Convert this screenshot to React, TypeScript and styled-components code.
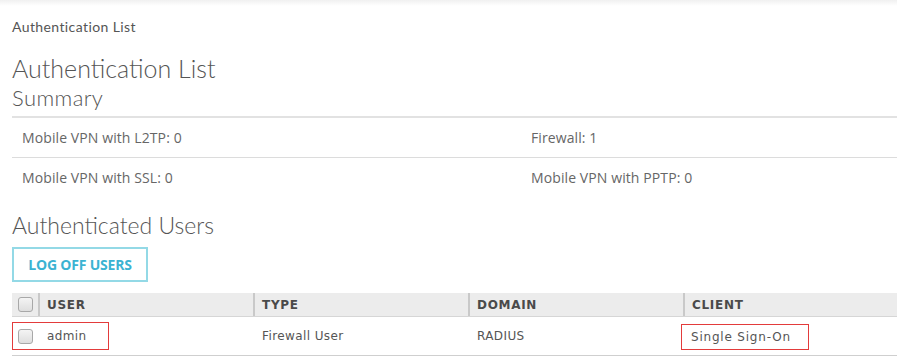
import React from "react";
import styled, { createGlobalStyle } from "styled-components";

const Global = createGlobalStyle`
  html, body { margin: 0; padding: 0; background: #fff; }
  body { width: 897px; height: 361px; overflow: hidden; }
`;

const Page = styled.div`
  position: relative;
  width: 897px;
  height: 361px;
  overflow: hidden;
  background: #fff;
  &::before {
    content: "";
    position: absolute;
    left: 0; right: 0; top: 0;
    height: 6px;
    background: linear-gradient(#f0f0f0, #fff);
  }
`;

const Content = styled.div`
  padding: 18px 0 0 12px;
  display: flex;
  flex-direction: column;
`;

const Breadcrumb = styled.div`
  font-family: "Lato", sans-serif;
  font-size: 14px;
  letter-spacing: 0.4px;
  color: #555;
  line-height: 18px;
`;

const Title = styled.h1`
  margin: 18px 0 0 0;
  font-family: "Lato", sans-serif;
  font-weight: 300;
  font-size: 25px;
  line-height: 28px;
  color: #555;
`;

const SubTitle = styled.h2`
  margin: 3px 0 0 0;
  font-family: "Lato", sans-serif;
  font-weight: 300;
  font-size: 22px;
  letter-spacing: 0.4px;
  line-height: 26px;
  color: #555;
`;

const Summary = styled.div`
  margin-top: 5px;
  border-top: 2px solid #e2e2e2;
  display: flex;
  flex-direction: column;
`;

const SummaryRow = styled.div<{ $last?: boolean }>`
  display: grid;
  grid-template-columns: 509px 1fr;
  height: 39px;
  align-items: center;
  border-bottom: ${(p) => (p.$last ? "none" : "1px solid #dcdcdc")};
  padding-left: 10px;
  font-family: "Open Sans", sans-serif;
  font-size: 14px;
  letter-spacing: 0.1px;
  color: #666;
`;

const SectionTitle = styled.h2`
  margin: 14px 0 0 0;
  font-family: "Lato", sans-serif;
  font-weight: 300;
  font-size: 23px;
  line-height: 28px;
  color: #555;
`;

const Button = styled.button`
  margin-top: 8px;
  align-self: flex-start;
  width: 136px;
  height: 35px;
  border: 2px solid #93d9e6;
  background: #fff;
  color: #3bb3d2;
  font-family: "Open Sans", sans-serif;
  font-weight: 700;
  font-size: 14px;
  letter-spacing: -0.2px;
  padding: 0;
  cursor: pointer;
`;

const Table = styled.div`
  margin-top: 11px;
  display: flex;
  flex-direction: column;
  font-family: "DejaVu Sans", Verdana, sans-serif;
  color: #555;
`;

const Row = styled.div<{ $head?: boolean }>`
  display: grid;
  grid-template-columns: 26px 215px 215px 215px 1fr;
  height: ${(p) => (p.$head ? "23px" : "38px")};
  background: ${(p) => (p.$head ? "#ececec" : "#fff")};
  border-bottom: 1px solid ${(p) => (p.$head ? "#d6d6d6" : "#cfcfcf")};
  align-items: center;
`;

const HeadCell = styled.div<{ $sep?: boolean }>`
  height: 100%;
  display: flex;
  align-items: center;
  padding-left: 7px;
  border-left: ${(p) => (p.$sep ? "2px solid #c9c9c9" : "none")};
  font-weight: 700;
  font-size: 12px;
  color: #4a4a4a;
  letter-spacing: 0.7px;
`;

const CheckCell = styled.div`
  position: relative;
  height: 100%;
  display: flex;
  align-items: center;
  padding-left: 6px;
`;

const Cell = styled.div`
  height: 100%;
  display: flex;
  align-items: center;
  padding-left: 9px;
  font-size: 12px;
  color: #555;
  letter-spacing: 0.4px;
`;

const Box = styled.span`
  display: inline-block;
  width: 13px;
  height: 13px;
  border: 1px solid #a8a8a8;
  border-radius: 3px;
  background: linear-gradient(#f4f4f4, #dedede);
`;

const Highlight = styled.span`
  position: absolute;
  left: 0;
  top: 5px;
  width: 95px;
  height: 26px;
  border: 1px solid #e33b3b;
  pointer-events: none;
`;

const Boxed = styled.span`
  display: inline-flex;
  align-items: center;
  height: 24px;
  margin-left: -11px;
  margin-top: 2px;
  padding: 0 17px 0 9px;
  border: 1px solid #e33b3b;
  letter-spacing: 0.8px;
`;

export default function App() {
  return (
    <Page>
      <Global />
      <Content>
        <Breadcrumb>Authentication List</Breadcrumb>
        <Title>Authentication List</Title>
        <SubTitle>Summary</SubTitle>
        <Summary>
          <SummaryRow>
            <span>Mobile VPN with L2TP: 0</span>
            <span>Firewall: 1</span>
          </SummaryRow>
          <SummaryRow $last>
            <span>Mobile VPN with SSL: 0</span>
            <span>Mobile VPN with PPTP: 0</span>
          </SummaryRow>
        </Summary>
        <SectionTitle>Authenticated Users</SectionTitle>
        <Button>LOG OFF USERS</Button>
        <Table>
          <Row $head>
            <CheckCell><Box /></CheckCell>
            <HeadCell $sep>USER</HeadCell>
            <HeadCell $sep>TYPE</HeadCell>
            <HeadCell $sep>DOMAIN</HeadCell>
            <HeadCell $sep>CLIENT</HeadCell>
          </Row>
          <Row>
            <CheckCell><Box /><Highlight /></CheckCell>
            <Cell>admin</Cell>
            <Cell>Firewall User</Cell>
            <Cell>RADIUS</Cell>
            <Cell><Boxed>Single Sign-On</Boxed></Cell>
          </Row>
        </Table>
      </Content>
    </Page>
  );
}
